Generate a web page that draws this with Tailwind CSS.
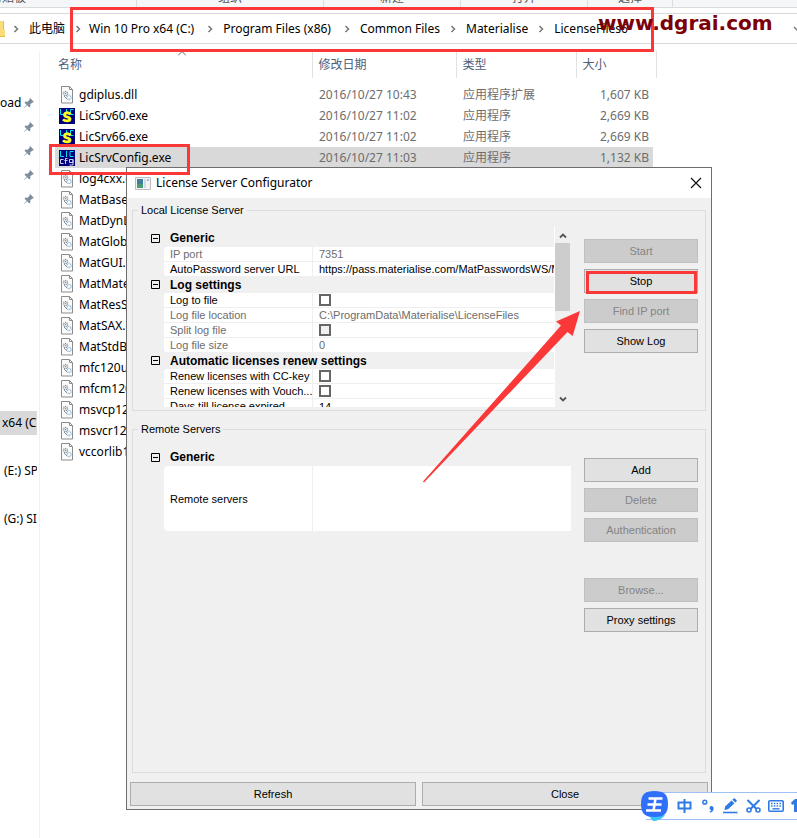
<!DOCTYPE html>
<html lang="zh-CN">
<head>
<meta charset="utf-8">
<title>License Server Configurator</title>
<script src="https://cdn.jsdelivr.net/npm/@tailwindcss/browser@4"></script>
</head>
<body class="relative min-h-screen overflow-hidden bg-white font-['Noto_Sans','Noto_Sans_CJK_SC',sans-serif] text-[12px] leading-4 text-black">

<svg class="hidden" aria-hidden="true">
  <symbol id="dll" viewBox="0 0 16 18">
    <path d="M3.500.500h8l3 3v13.500h-11z" fill="#fbfbfb" stroke="#8c8c8c"/>
    <path d="M11.500.500v3h3" fill="none" stroke="#8c8c8c"/>
    <circle cx="7.500" cy="7.500" r="2" fill="#fff" stroke="#8b9299" stroke-dasharray="1 .6" stroke-width="1.400"/>
    <circle cx="7.500" cy="7.500" r=".8" fill="#8b9299"/>
    <circle cx="11" cy="11.500" r="2" fill="#fff" stroke="#8db9dc" stroke-dasharray="1 .6" stroke-width="1.400"/>
    <path d="M6 10l3 3" stroke="#8b9299"/>
  </symbol>
  <symbol id="lic" viewBox="0 0 16 16">
    <path d="M0 0h16v16H0z" fill="#00007f"/>
    <path d="M1.500 1v5.500H4M7.500 1v3M14.500 1.500H11.500v5h3" fill="none" stroke="#00e5f0"/>
    <path d="M11.500 6.500C10 4 5.500 4.500 5.500 7c0 2.500 5.500 1.500 5.500 4 0 2.500-5 2.500-7 .4" fill="none" stroke="#ffff20" stroke-width="2.800"/>
    <path d="M8 3.500h1.500v2H8zM7.500 12H9v2H7.500z" fill="#ffff20"/>
  </symbol>
  <symbol id="cfg" viewBox="0 0 16 16">
    <path d="M0 0h16v16H0z" fill="#00007f"/>
    <path d="M1.500 1v5.500H5M7.500 1v6M14.500 1.500H11v5h3.500" fill="none" stroke="#00e5f0"/>
    <path d="M4.500 9.500h-3v4h3M6.500 14V8.500h2M5.500 10.500h3M14 9.500h-3.500v3h3.500zv5.500h-3.500" fill="none" stroke="#d0d0e8"/>
  </symbol>
  <symbol id="pin" viewBox="0 0 12 12">
    <path d="M7 1l4 4-1.200.6-.6-.2-2 2 .2 2L6.300 10.500 4.200 8.300 1.200 11 1 10.800 3.700 7.800 1.500 5.700 2.600 4.600l2 .2 2-2L6.400 2z" fill="#7e8e9c"/>
  </symbol>
  <symbol id="sep" viewBox="0 0 6 8"><path d="M1.500 1l3 3-3 3" fill="none" stroke="#777" stroke-width="1.500"/></symbol>
</svg>

<div class="flex h-2 overflow-hidden border-b border-[#dadbdc] bg-[#f5f6f7] text-[#555]">
  <div class="flex w-[137px] items-end border-r border-[#dadbdc]"><span class="-ml-2.5 mb-px">剪贴板</span></div>
  <div class="flex w-[187px] items-end justify-center border-r border-[#dadbdc]"><span class="mb-px">组织</span></div>
  <div class="flex w-[137px] items-end justify-center border-r border-[#dadbdc]"><span class="mb-px">新建</span></div>
  <div class="flex w-[127px] items-end justify-center border-r border-[#dadbdc]"><span class="mb-px">打开</span></div>
  <div class="flex w-[85px] items-end justify-center border-r border-[#dadbdc]"><span class="mb-px">选择</span></div>
</div>

<nav class="relative mt-[5px] flex h-[31px] items-center border-y border-[#d9d9d9] whitespace-nowrap">
  <svg class="h-4 w-[5px] shrink-0" viewBox="0 0 5 16"><path d="M0 0h4v9h1v7H0z" fill="#fbdc77"/><path d="M3.500 0v9M0 15.500h5" stroke="#e8bd47"/></svg>
  <svg class="ml-2 h-2 w-1.5"><use href="#sep"/></svg>
  <a href="#" class="ml-2.5">此电脑</a>
  <svg class="ml-2.5 h-2 w-1.5"><use href="#sep"/></svg>
  <a href="#" class="ml-2">Win 10 Pro x64 (C:)</a>
  <svg class="ml-[13px] h-2 w-1.5"><use href="#sep"/></svg>
  <a href="#" class="ml-2.5">Program Files (x86)</a>
  <svg class="ml-[13px] h-2 w-1.5"><use href="#sep"/></svg>
  <a href="#" class="ml-2.5">Common Files</a>
  <svg class="ml-2.5 h-2 w-1.5"><use href="#sep"/></svg>
  <a href="#" class="ml-2.5">Materialise</a>
  <svg class="ml-2.5 h-2 w-1.5"><use href="#sep"/></svg>
  <a href="#" class="ml-2.5">LicenseFiles6</a>
  <svg class="absolute -right-1 top-3 h-1.5 w-2" viewBox="0 0 8 6"><path d="M1 1l3 3 3-3" fill="none" stroke="#777" stroke-width="1.500"/></svg>
</nav>

<div class="mt-[7px] flex">
  <aside class="h-[787px] w-10 shrink-0 overflow-hidden border-r border-[#f0f0f0] pr-0.5 pt-10 whitespace-nowrap">
    <div class="flex h-6 items-center"><span class="w-[23px]">oad</span><svg class="size-3 shrink-0"><use href="#pin"/></svg></div>
    <div class="flex h-6 items-center pl-[23px]"><svg class="size-3"><use href="#pin"/></svg></div>
    <div class="flex h-6 items-center pl-[23px]"><svg class="size-3"><use href="#pin"/></svg></div>
    <div class="flex h-6 items-center pl-[23px]"><svg class="size-3"><use href="#pin"/></svg></div>
    <div class="flex h-6 items-center pl-[23px]"><svg class="size-3"><use href="#pin"/></svg></div>
    <div class="mt-50 h-6 overflow-hidden bg-[#d9d9d9] pl-0.5 leading-6">x64 (C:)</div>
    <div class="mt-6 h-6 overflow-hidden pl-1 leading-6">(E:) SP</div>
    <div class="mt-6 h-6 overflow-hidden pl-1 leading-6">(G:) SI</div>
  </aside>

  <table class="relative ml-[15px] w-[601px] table-fixed self-start border-collapse text-left text-[#6d6d6d]">
    <colgroup><col class="w-[257px]"><col class="w-[144px]"><col class="w-[120px]"><col class="w-[77px]"><col class="w-[3px]"></colgroup>
    <thead>
      <tr class="h-[27px] text-[#4c607a]">
        <th class="relative border-r border-[#e2e2e2] p-0 pl-[3px] font-normal">名称
          <svg class="absolute left-[123px] top-0 h-[5px] w-2" viewBox="0 0 8 5"><path d="M0 4.500L4 .5l4 4" fill="none" stroke="#666"/></svg></th>
        <th class="border-r border-[#e2e2e2] p-0 pl-1.5 font-normal">修改日期</th>
        <th class="border-r border-[#e2e2e2] p-0 pl-1.5 font-normal">类型</th>
        <th colspan="2" class="border-r border-[#e2e2e2] p-0 pl-1.5 font-normal">大小</th>
      </tr>
      <tr class="h-1.5"><td colspan="5" class="p-0"></td></tr>
    </thead>
    <tbody>
      <tr class="h-[21px]"><td class="p-0 pl-[3px]"><div class="flex items-center gap-[5px] text-black"><svg class="h-[18px] w-4"><use href="#dll"/></svg>gdiplus.dll</div></td><td class="p-0 pl-[7px]">2016/10/27 10:43</td><td class="p-0 pl-[7px]">应用程序扩展</td><td class="p-0 pr-1 text-right">1,607 KB</td><td class="p-0"></td></tr>
      <tr class="h-[21px]"><td class="p-0 pl-1"><div class="flex items-center gap-1 text-black"><svg class="size-4"><use href="#lic"/></svg>LicSrv60.exe</div></td><td class="p-0 pl-[7px]">2016/10/27 11:02</td><td class="p-0 pl-[7px]">应用程序</td><td class="p-0 pr-1 text-right">2,669 KB</td><td class="p-0"></td></tr>
      <tr class="h-[21px]"><td class="p-0 pl-1"><div class="flex items-center gap-1 text-black"><svg class="size-4"><use href="#lic"/></svg>LicSrv66.exe</div></td><td class="p-0 pl-[7px]">2016/10/27 11:02</td><td class="p-0 pl-[7px]">应用程序</td><td class="p-0 pr-1 text-right">2,669 KB</td><td class="p-0"></td></tr>
      <tr class="h-[21px]"><td class="bg-[#d9d9d9] p-0 pl-1"><div class="flex items-center gap-1 text-black"><svg class="size-4"><use href="#cfg"/></svg>LicSrvConfig.exe</div></td><td class="bg-[#d9d9d9] p-0 pl-[7px]">2016/10/27 11:03</td><td class="bg-[#d9d9d9] p-0 pl-[7px]">应用程序</td><td class="bg-[#d9d9d9] p-0 pr-1 text-right">1,132 KB</td><td class="p-0"></td></tr>
      <tr class="h-[21px]"><td class="p-0 pl-[3px]" colspan="5"><div class="flex items-center gap-[5px] text-black"><svg class="h-[18px] w-4"><use href="#dll"/></svg>log4cxx.dll</div></td></tr>
      <tr class="h-[21px]"><td class="p-0 pl-[3px]" colspan="5"><div class="flex items-center gap-[5px] text-black"><svg class="h-[18px] w-4"><use href="#dll"/></svg>MatBase</div></td></tr>
      <tr class="h-[21px]"><td class="p-0 pl-[3px]" colspan="5"><div class="flex items-center gap-[5px] text-black"><svg class="h-[18px] w-4"><use href="#dll"/></svg>MatDynL</div></td></tr>
      <tr class="h-[21px]"><td class="p-0 pl-[3px]" colspan="5"><div class="flex items-center gap-[5px] text-black"><svg class="h-[18px] w-4"><use href="#dll"/></svg>MatGlob</div></td></tr>
      <tr class="h-[21px]"><td class="p-0 pl-[3px]" colspan="5"><div class="flex items-center gap-[5px] text-black"><svg class="h-[18px] w-4"><use href="#dll"/></svg>MatGUI.dll</div></td></tr>
      <tr class="h-[21px]"><td class="p-0 pl-[3px]" colspan="5"><div class="flex items-center gap-[5px] text-black"><svg class="h-[18px] w-4"><use href="#dll"/></svg>MatMate</div></td></tr>
      <tr class="h-[21px]"><td class="p-0 pl-[3px]" colspan="5"><div class="flex items-center gap-[5px] text-black"><svg class="h-[18px] w-4"><use href="#dll"/></svg>MatResS</div></td></tr>
      <tr class="h-[21px]"><td class="p-0 pl-[3px]" colspan="5"><div class="flex items-center gap-[5px] text-black"><svg class="h-[18px] w-4"><use href="#dll"/></svg>MatSAX.dll</div></td></tr>
      <tr class="h-[21px]"><td class="p-0 pl-[3px]" colspan="5"><div class="flex items-center gap-[5px] text-black"><svg class="h-[18px] w-4"><use href="#dll"/></svg>MatStdB</div></td></tr>
      <tr class="h-[21px]"><td class="p-0 pl-[3px]" colspan="5"><div class="flex items-center gap-[5px] text-black"><svg class="h-[18px] w-4"><use href="#dll"/></svg>mfc120u.dll</div></td></tr>
      <tr class="h-[21px]"><td class="p-0 pl-[3px]" colspan="5"><div class="flex items-center gap-[5px] text-black"><svg class="h-[18px] w-4"><use href="#dll"/></svg>mfcm120.dll</div></td></tr>
      <tr class="h-[21px]"><td class="p-0 pl-[3px]" colspan="5"><div class="flex items-center gap-[5px] text-black"><svg class="h-[18px] w-4"><use href="#dll"/></svg>msvcp120.dll</div></td></tr>
      <tr class="h-[21px]"><td class="p-0 pl-[3px]" colspan="5"><div class="flex items-center gap-[5px] text-black"><svg class="h-[18px] w-4"><use href="#dll"/></svg>msvcr120.dll</div></td></tr>
      <tr class="h-[21px]"><td class="p-0 pl-[3px]" colspan="5"><div class="flex items-center gap-[5px] text-black"><svg class="h-[18px] w-4"><use href="#dll"/></svg>vccorlib120.dll</div></td></tr>
    </tbody>
  </table>
</div>

<!-- Configurator window -->
<section class="absolute left-[126px] top-[167px] flex h-[643px] w-[586px] flex-col border border-[#6e6e6e] bg-[#f0f0f0] font-['Liberation_Sans',Arial,sans-serif] text-[11px] leading-[14px] whitespace-nowrap">
  <header class="flex h-[30px] shrink-0 items-center bg-white pl-2 pr-[9px] font-['Noto_Sans',sans-serif] text-[12px]">
    <svg class="h-[13px] w-4" viewBox="0 0 16 13"><path d="M.5.500h15v12H.5z" fill="#f4f4f4" stroke="#b9bdc2"/><path d="M2 2h6v9H2z" fill="#3f7f9a"/><path d="M2 7h6v4H2z" fill="#4a9a78"/><path d="M9 2h2v9H9z" fill="#d0dde8"/><path d="M12 2h2v2h-2z" fill="#b0b6bc"/></svg>
    <h1 class="ml-[5px] flex-1">License Server Configurator</h1>
    <button aria-label="Close window" class="size-3"><svg class="size-3" viewBox="0 0 12 12"><path d="M1 1l10 10M11 1L1 11" stroke="#111" stroke-width="1.200"/></svg></button>
  </header>

  <div class="flex flex-1 flex-col gap-2.5 px-[5px] pt-1">
    <fieldset class="border border-[#dcdcdc]">
      <legend class="ml-[5px] px-[3px] leading-4">Local License Server</legend>
      <div class="flex h-[192px] items-start pl-[17px] pr-[7px]">
        <div class="mt-2 flex h-[181px] flex-1 overflow-hidden">
          <div class="min-w-0 flex-1 pt-[3px]">
            <div class="flex h-[18px] items-center gap-2.5 pl-px text-[12px] font-bold"><svg class="size-[9px]" viewBox="0 0 9 9"><path d="M.5.500h8v8h-8zM2 4.500h5" fill="none" stroke="#000"/></svg>Generic</div>
            <div class="ml-3.5 overflow-hidden rounded-l-[3px] bg-white">
              <div class="flex h-[15px] border-b border-[#efefef]"><label for="ip" class="w-[149px] shrink-0 border-r border-[#efefef] pl-1.5 text-[#6d6d6d]">IP port</label><input id="ip" value="7351" disabled class="min-w-0 flex-1 pl-1.5 text-[#6d6d6d]"></div>
              <div class="flex h-[14px]"><label for="url" class="w-[149px] shrink-0 border-r border-[#efefef] pl-1.5">AutoPassword server URL</label><input id="url" value="https://pass.materialise.com/MatPasswordsWS/MatPasswords" class="min-w-0 flex-1 pl-1.5"></div>
            </div>
            <div class="flex h-[17px] items-center gap-2.5 pl-px text-[12px] font-bold"><svg class="size-[9px]" viewBox="0 0 9 9"><path d="M.5.500h8v8h-8zM2 4.500h5" fill="none" stroke="#000"/></svg>Log settings</div>
            <div class="ml-3.5 overflow-hidden rounded-l-[3px] bg-white">
              <div class="flex h-[15px] border-b border-[#efefef]"><label for="log" class="w-[149px] shrink-0 border-r border-[#efefef] pl-1.5">Log to file</label><input id="log" type="checkbox" class="mt-px ml-1.5 size-3 appearance-none border-2 border-[#666] bg-white"></div>
              <div class="flex h-[15px] border-b border-[#efefef]"><label for="loc" class="w-[149px] shrink-0 border-r border-[#efefef] pl-1.5 text-[#6d6d6d]">Log file location</label><input id="loc" value="C:\ProgramData\Materialise\LicenseFiles" disabled class="min-w-0 flex-1 pl-1.5 text-[#6d6d6d]"></div>
              <div class="flex h-[15px] border-b border-[#efefef]"><label for="split" class="w-[149px] shrink-0 border-r border-[#efefef] pl-1.5 text-[#6d6d6d]">Split log file</label><input id="split" type="checkbox" disabled class="mt-px ml-1.5 size-3 appearance-none border-2 border-[#666] bg-[#f0f0f0]"></div>
              <div class="flex h-[14px]"><label for="size" class="w-[149px] shrink-0 border-r border-[#efefef] pl-1.5 text-[#6d6d6d]">Log file size</label><input id="size" value="0" disabled class="min-w-0 flex-1 pl-1.5 text-[#6d6d6d]"></div>
            </div>
            <div class="flex h-[17px] items-center gap-2.5 pl-px text-[12px] font-bold"><svg class="size-[9px]" viewBox="0 0 9 9"><path d="M.5.500h8v8h-8zM2 4.500h5" fill="none" stroke="#000"/></svg>Automatic licenses renew settings</div>
            <div class="ml-3.5 overflow-hidden rounded-tl-[3px] bg-white">
              <div class="flex h-[15px] border-b border-[#efefef]"><label for="cc" class="w-[149px] shrink-0 border-r border-[#efefef] pl-1.5">Renew licenses with CC-key</label><input id="cc" type="checkbox" class="mt-px ml-1.5 size-3 appearance-none border-2 border-[#666] bg-white"></div>
              <div class="flex h-[15px] border-b border-[#efefef]"><label for="vo" class="w-[149px] shrink-0 overflow-hidden border-r border-[#efefef] pl-1.5">Renew licenses with Vouch...</label><input id="vo" type="checkbox" class="mt-px ml-1.5 size-3 appearance-none border-2 border-[#666] bg-white"></div>
              <div class="flex h-[15px]"><label for="days" class="w-[149px] shrink-0 border-r border-[#efefef] pl-1.5">Days till license expired</label><input id="days" value="14" class="min-w-0 flex-1 pl-1.5"></div>
            </div>
          </div>
          <div class="flex w-4 flex-col items-center border-l border-white">
            <svg class="mt-1 h-[13px] w-2 shrink-0" viewBox="0 0 8 13"><path d="M1 7.500l3-3 3 3" fill="none" stroke="#555" stroke-width="1.800"/></svg>
            <div class="h-[68px] w-full bg-[#cdcdcd]"></div>
            <svg class="mt-auto h-4 w-2 shrink-0" viewBox="0 0 8 16"><path d="M1 6.500l3 3 3-3" fill="none" stroke="#555" stroke-width="1.800"/></svg>
          </div>
        </div>
        <div class="mt-[21px] ml-3.5 flex w-[114px] flex-col gap-1.5">
          <button disabled class="h-6 border border-[#bfbfbf] bg-[#ccc] text-[#848484]">Start</button>
          <button class="h-6 border border-[#adadad] bg-[#e1e1e1]">Stop</button>
          <button disabled class="h-6 border border-[#bfbfbf] bg-[#ccc] text-[#848484]">Find IP port</button>
          <button class="h-6 border border-[#adadad] bg-[#e1e1e1]">Show Log</button>
        </div>
      </div>
    </fieldset>

    <fieldset class="flex-1 border border-[#dcdcdc]">
      <legend class="ml-[5px] px-[3px] leading-4">Remote Servers</legend>
      <div class="flex items-start pl-[17px] pr-[7px]">
        <div class="mt-[11px] flex-1">
          <div class="flex h-[18px] items-center gap-2.5 pl-px text-[12px] font-bold"><svg class="size-[9px]" viewBox="0 0 9 9"><path d="M.5.500h8v8h-8zM2 4.500h5" fill="none" stroke="#000"/></svg>Generic</div>
          <div class="ml-3.5 flex h-[65px] overflow-hidden rounded-l-[4px] bg-white"><label for="remote" class="flex w-[149px] items-center border-r border-[#efefef] pl-1.5">Remote servers</label><input id="remote" class="min-w-0 flex-1 pl-1.5"></div>
        </div>
        <div class="mt-[21px] ml-[13px] flex w-[114px] flex-col gap-1.5">
          <button class="h-6 border border-[#adadad] bg-[#e1e1e1]">Add</button>
          <button disabled class="h-6 border border-[#bfbfbf] bg-[#ccc] text-[#848484]">Delete</button>
          <button disabled class="h-6 border border-[#bfbfbf] bg-[#ccc] text-[#848484]">Authentication</button>
          <button disabled class="mt-[30px] h-6 border border-[#bfbfbf] bg-[#ccc] text-[#848484]">Browse...</button>
          <button class="h-6 border border-[#adadad] bg-[#e1e1e1]">Proxy settings</button>
        </div>
      </div>
    </fieldset>
  </div>

  <footer class="mt-[9px] mb-[3px] grid grid-cols-2 gap-1.5 px-[3px]">
    <button class="h-6 border border-[#adadad] bg-[#e1e1e1]">Refresh</button>
    <button class="h-6 border border-[#adadad] bg-[#e1e1e1]">Close</button>
  </footer>
</section>

<!-- Annotations -->
<div class="pointer-events-none absolute left-[70px] top-[7px] h-[45px] w-[584px] border-3 border-[#fb3838]"></div>
<div class="pointer-events-none absolute left-[49px] top-[144px] h-[31px] w-[141px] border-3 border-[#fb3838]"></div>
<div class="pointer-events-none absolute left-[586px] top-[271px] h-[23px] w-[111px] border-3 border-[#fb3838]"></div>
<svg class="pointer-events-none absolute left-[420px] top-[308px] h-[178px] w-[164px]" viewBox="420 308 164 178"><path d="M580 311L556 321.500L561 325.500L423 481.500L424 482.500L567.500 332L572.700 336Z" fill="#fb3838"/></svg>
<div class="pointer-events-none absolute left-[598px] top-[11px] font-['DejaVu_Sans',sans-serif] text-[20px] leading-6 font-bold text-[#7c0008]">www.dgrai.com</div>

<!-- Input method bar -->
<div class="absolute -right-1 top-[792px] flex h-7 w-[155px] items-center border-y border-[#9fc0f5] bg-white text-[#2f7be6]">
  <svg class="absolute -left-[5px] -top-[2px] h-[30px] w-[27px]" viewBox="0 0 27 30"><path d="M8 25l4 5c4 0 9-2 12-6z" fill="#3cc4f7"/><path d="M13.500 0C23 0 27 3 27 13s-4 13-13.500 13S0 23 0 13 4 0 13.500 0z" fill="#2f6ffb"/><path d="M7.500 7.500h14M6.500 13.500h14M5 19.500h15M14.500 7.500l-2 12" fill="none" stroke="#fff" stroke-width="2.600"/></svg>
  <svg class="ml-[31px] h-4 w-[15px] shrink-0" viewBox="0 0 15 16"><path d="M1.500 4.500h12v6h-12zM7.500 1v14" fill="none" stroke="currentColor" stroke-width="2"/></svg>
  <svg class="ml-2.5 h-4 w-3 shrink-0" viewBox="0 0 12 16"><circle cx="2.800" cy="4.200" r="1.900" fill="none" stroke="currentColor" stroke-width="1.500"/><path d="M9 8a2.500 2.500 0 0 1 2.600 2.600c0 2-1.200 3.600-3.400 4.200l-.6-1.200c1-.4 1.500-.8 1.600-1.400A2.200 2.200 0 0 1 9 8z" fill="currentColor"/></svg>
  <svg class="ml-[9px] h-4 w-[15px] shrink-0" viewBox="0 0 15 16"><path d="M0 14.500h14.500" stroke="currentColor" stroke-width="1.600"/><path d="M1.500 12l.6-3.600 6.400-6 3 2.900-6.400 6zM9.300 1.700L10.600.600q.8-.5 1.500.1l1.400 1.400q.6.700 0 1.400l-1.200 1.100z" fill="currentColor"/></svg>
  <svg class="ml-2 h-4 w-[15px] shrink-0" viewBox="0 0 15 16"><path d="M1.500 2l9 9M13.500 2l-9 9" stroke="currentColor" stroke-width="2"/><circle cx="3" cy="12" r="2" fill="none" stroke="currentColor" stroke-width="1.600"/><circle cx="12" cy="12" r="2" fill="none" stroke="currentColor" stroke-width="1.600"/></svg>
  <svg class="ml-[7px] size-4 shrink-0" viewBox="0 0 16 16"><rect x=".8" y="2.800" width="14.400" height="10.400" rx="1" fill="none" stroke="currentColor" stroke-width="1.600"/><path d="M3 5.500h10M3 8h10" stroke="currentColor" stroke-width="1.400" stroke-dasharray="1.500 1.300"/><path d="M4.500 10.800h7" stroke="currentColor" stroke-width="1.400"/></svg>
  <svg class="ml-[7px] h-4 w-2 shrink-0" viewBox="0 0 8 16"><path d="M0 4.500L4 1h4v3l-1 1v9H3V6L1 7z" fill="currentColor"/></svg>
</div>
</body>
</html>
